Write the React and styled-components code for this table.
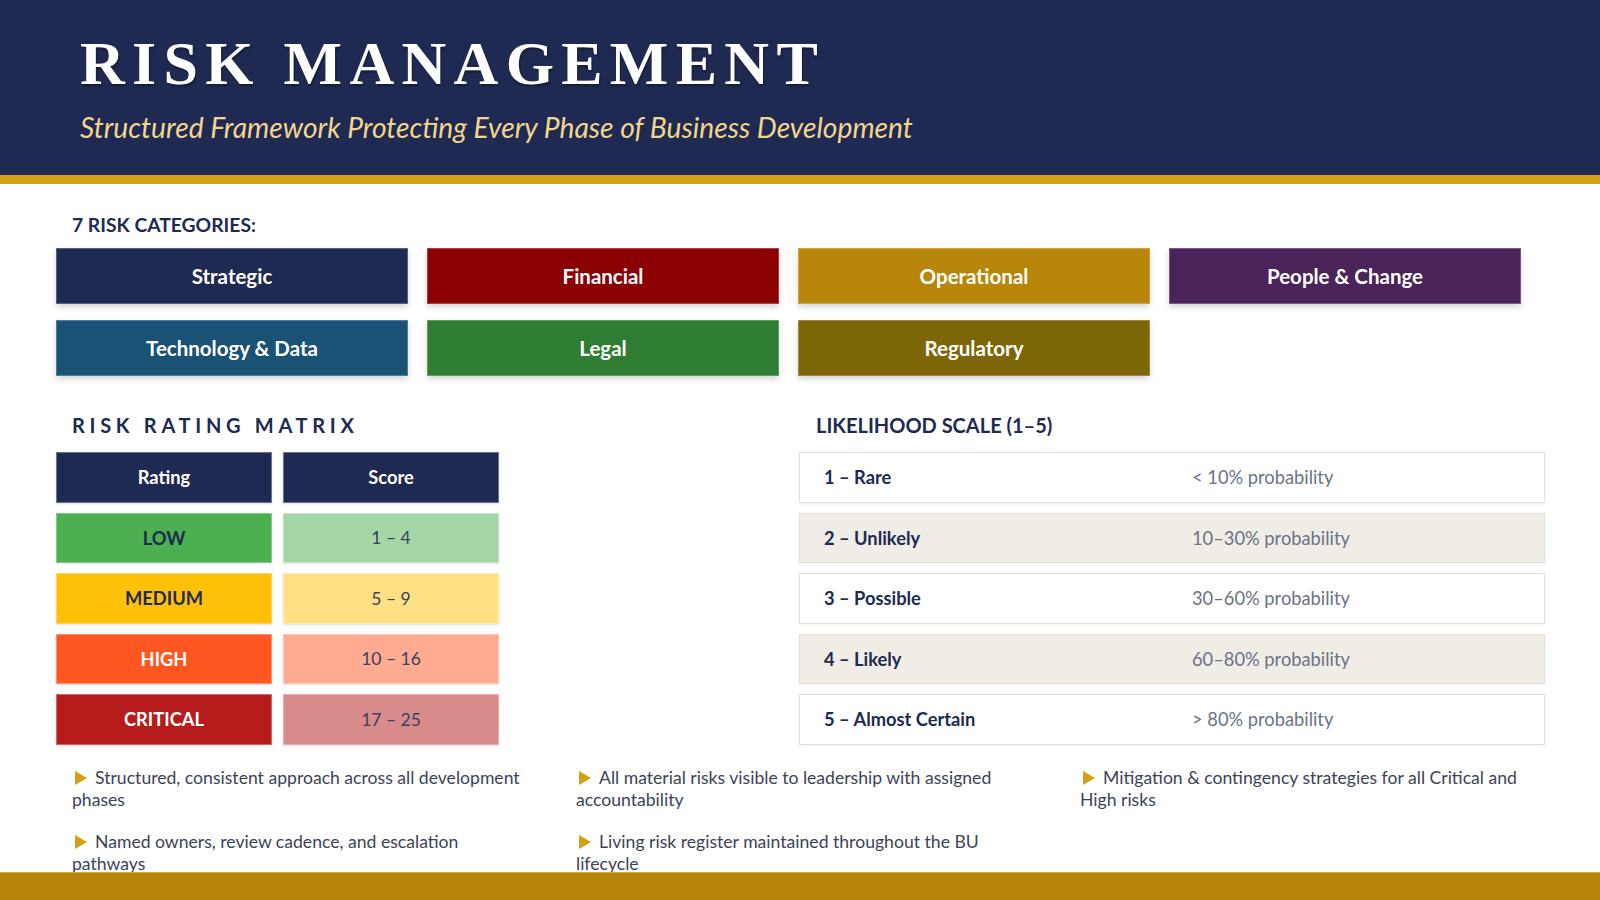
import React from 'react';
import styled, { createGlobalStyle } from 'styled-components';

const NAVY = '#1e2a52';
const GOLD = '#d4a017';
const SANS = "Lato, 'Open Sans', 'Noto Sans', sans-serif";

const categories = [
  { label: 'Strategic', color: '#1e2a52' },
  { label: 'Financial', color: '#8b0000' },
  { label: 'Operational', color: '#b8860b' },
  { label: 'People & Change', color: '#4a235a' },
  { label: 'Technology & Data', color: '#1a5276' },
  { label: 'Legal', color: '#2e7d32' },
  { label: 'Regulatory', color: '#7d6608' },
];

const ratings = [
  { rating: 'LOW', score: '1 – 4', bg: '#4caf50', tint: '#a5d6a7', ink: NAVY },
  { rating: 'MEDIUM', score: '5 – 9', bg: '#ffc107', tint: '#ffe082', ink: NAVY },
  { rating: 'HIGH', score: '10 – 16', bg: '#ff5722', tint: '#ffab91', ink: '#ffffff' },
  { rating: 'CRITICAL', score: '17 – 25', bg: '#b71c1c', tint: '#d98a8a', ink: '#ffffff' },
];

const likelihood = [
  { label: '1 – Rare', value: '< 10% probability' },
  { label: '2 – Unlikely', value: '10–30% probability' },
  { label: '3 – Possible', value: '30–60% probability' },
  { label: '4 – Likely', value: '60–80% probability' },
  { label: '5 – Almost Certain', value: '> 80% probability' },
];

const bullets = [
  'Structured, consistent approach across all development phases',
  'All material risks visible to leadership with assigned accountability',
  'Mitigation & contingency strategies for all Critical and High risks',
  'Named owners, review cadence, and escalation pathways',
  'Living risk register maintained throughout the BU lifecycle',
];

const GlobalStyle = createGlobalStyle`
  html, body {
    margin: 0;
    padding: 0;
    background: #ffffff;
    overflow: hidden;
  }
  * { box-sizing: border-box; }
`;

const Slide = styled.div`
  width: 1600px;
  height: 900px;
  display: flex;
  flex-direction: column;
  background: #ffffff;
  font-family: ${SANS};
  overflow: hidden;
`;

const Header = styled.header`
  flex-shrink: 0;
  height: 184px;
  padding: 32px 0 0 80px;
  background: ${NAVY};
  border-bottom: 9px solid ${GOLD};
`;

const Title = styled.h1`
  margin: 0;
  font-family: 'Liberation Serif', 'Times New Roman', serif;
  font-size: 62px;
  line-height: 1;
  font-weight: 700;
  letter-spacing: 7.3px;
  color: #ffffff;
  text-shadow: 1px 2px 2px rgba(0, 0, 0, 0.35);
`;

const Subtitle = styled.p`
  margin: 17px 0 0;
  font-size: 28.2px;
  line-height: 1.2;
  font-style: italic;
  color: #f4d58d;
`;

const Main = styled.main`
  flex: 1;
  min-height: 0;
  overflow: hidden;
  padding: 29px 55px 0 56px;
`;

const SectionLabel = styled.h2`
  margin: 0 0 12px 16px;
  font-size: 19.3px;
  line-height: 1.2;
  font-weight: 700;
  color: ${NAVY};
`;

const CategoryGrid = styled.div`
  display: grid;
  grid-template-columns: repeat(4, 352px);
  grid-auto-rows: 56px;
  column-gap: 19px;
  row-gap: 16px;
`;

const CategoryCard = styled.div`
  display: flex;
  align-items: center;
  justify-content: center;
  background: ${(p) => p.$color};
  color: #ffffff;
  font-size: 20.5px;
  font-weight: 700;
  border: 1px solid rgba(255, 255, 255, 0.25);
  box-shadow: 0 3px 6px rgba(0, 0, 0, 0.16);
`;

const Panels = styled.div`
  display: grid;
  grid-template-columns: 743px 1fr;
  margin-top: 35px;
`;

const MatrixTitle = styled.h2`
  margin: 2px 0 14px 16px;
  font-size: 20px;
  line-height: 1.25;
  font-weight: 700;
  letter-spacing: 4.7px;
  color: ${NAVY};
`;

const ScaleTitle = styled(SectionLabel)`
  margin: 2px 0 14px 17px;
  font-size: 20px;
  line-height: 1.25;
`;

const MatrixGrid = styled.div`
  display: grid;
  grid-template-columns: repeat(2, 216px);
  grid-auto-rows: 50.5px;
  column-gap: 11px;
  row-gap: 10px;
`;

const Cell = styled.div`
  display: flex;
  align-items: center;
  justify-content: center;
  background: ${(p) => p.$bg};
  color: ${(p) => p.$ink};
  font-size: ${(p) => (p.$bold ? '18.3px' : '17.5px')};
  font-weight: ${(p) => (p.$bold ? 700 : 400)};
  border: 1px solid rgba(255, 255, 255, 0.35);
  box-shadow: 0 1px 2px rgba(0, 0, 0, 0.12);
`;

const ScaleList = styled.div`
  display: grid;
  grid-auto-rows: 50.5px;
  row-gap: 10px;
`;

const ScaleRow = styled.div`
  display: grid;
  grid-template-columns: 368px 1fr;
  align-items: center;
  padding-left: 24px;
  background: ${(p) => (p.$shaded ? '#f0ede7' : '#ffffff')};
  border: 1px solid #e6e0d6;
  box-shadow: 0 1px 3px rgba(0, 0, 0, 0.06);
`;

const ScaleLabel = styled.span`
  font-size: 18.3px;
  font-weight: 700;
  color: ${NAVY};
`;

const ScaleValue = styled.span`
  font-size: 18.3px;
  color: #6b7385;
`;

const BulletGrid = styled.ul`
  display: grid;
  grid-template-columns: repeat(3, 454px);
  column-gap: 50px;
  row-gap: 20px;
  margin: 22px 0 0 16px;
  padding: 0;
  list-style: none;
`;

const Bullet = styled.li`
  font-size: 17.6px;
  line-height: 22px;
  color: #3c4357;
`;

const Arrow = styled.span`
  display: inline-block;
  width: 0;
  height: 0;
  margin: 0 8px 0 3px;
  border-left: 12px solid ${GOLD};
  border-top: 7px solid transparent;
  border-bottom: 7px solid transparent;
  vertical-align: -1px;
`;

const Footer = styled.footer`
  flex-shrink: 0;
  height: 28px;
  background: #b8860b;
  border-top: 1px solid #cfa74a;
`;

export default function App() {
  return (
    <>
      <GlobalStyle />
      <Slide>
        <Header>
          <Title>RISK MANAGEMENT</Title>
          <Subtitle>Structured Framework Protecting Every Phase of Business Development</Subtitle>
        </Header>

        <Main>
          <SectionLabel>7 RISK CATEGORIES:</SectionLabel>
          <CategoryGrid>
            {categories.map((c) => (
              <CategoryCard key={c.label} $color={c.color}>
                {c.label}
              </CategoryCard>
            ))}
          </CategoryGrid>

          <Panels>
            <section>
              <MatrixTitle>RISK RATING MATRIX</MatrixTitle>
              <MatrixGrid>
                <Cell $bg={NAVY} $ink="#ffffff" $bold>Rating</Cell>
                <Cell $bg={NAVY} $ink="#ffffff" $bold>Score</Cell>
                {ratings.map((r) => (
                  <React.Fragment key={r.rating}>
                    <Cell $bg={r.bg} $ink={r.ink} $bold>{r.rating}</Cell>
                    <Cell $bg={r.tint} $ink="#3a4060">{r.score}</Cell>
                  </React.Fragment>
                ))}
              </MatrixGrid>
            </section>

            <section>
              <ScaleTitle>LIKELIHOOD SCALE (1–5)</ScaleTitle>
              <ScaleList>
                {likelihood.map((l, i) => (
                  <ScaleRow key={l.label} $shaded={i % 2 === 1}>
                    <ScaleLabel>{l.label}</ScaleLabel>
                    <ScaleValue>{l.value}</ScaleValue>
                  </ScaleRow>
                ))}
              </ScaleList>
            </section>
          </Panels>

          <BulletGrid>
            {bullets.map((b) => (
              <Bullet key={b}>
                <Arrow />
                {b}
              </Bullet>
            ))}
          </BulletGrid>
        </Main>

        <Footer />
      </Slide>
    </>
  );
}
